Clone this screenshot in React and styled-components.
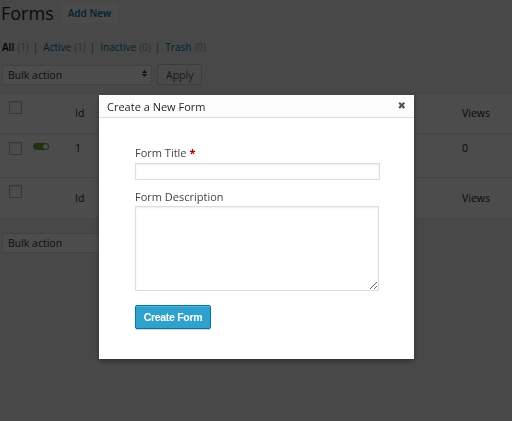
import styled, {createGlobalStyle} from 'styled-components'

const GlobalStyle = createGlobalStyle`
  html, body {
    margin: 0;
    padding: 0;
    background: #f1f1f1;
  }
  body {
    width: 512px;
    height: 421px;
    overflow: hidden;
    font-family: "Open Sans", "DejaVu Sans", sans-serif;
    font-size: 11px;
    color: #444;
  }
`

const Wrap = styled.div`
  display: flex;
  flex-direction: column;
`

const Heading = styled.div`
  display: flex;
  align-items: center;
  gap: 7px;
  height: 27px;
`

const Title = styled.h1`
  margin: 0 0 0 1px;
  font-size: 18px;
  font-weight: 400;
  line-height: 27px;
  color: #23282d;
`

const AddNew = styled.a`
  display: flex;
  align-items: center;
  height: 20px;
  padding: 0 7px;
  margin-top: -1px;
  background: #fafafa;
  border-radius: 2px;
  font-size: 10px;
  font-weight: 600;
  color: #0073aa;
`

const Filters = styled.ul`
  display: flex;
  list-style: none;
  margin: 13px 0 0 2px;
  padding: 0;
  font-size: 10px;
  line-height: 14px;
  color: #666;
`

const FilterItem = styled.li`
  display: flex;
  gap: 3px;
  color: ${p => (p.$current ? '#000' : '#0073aa')};
  font-weight: ${p => (p.$current ? 600 : 400)};
`

const Count = styled.span`
  color: #999;
  font-weight: 400;
`

const Sep = styled.span`
  color: #666;
  margin: 0 5px 0 4px;
`

const TableNav = styled.div`
  display: flex;
  align-items: center;
  gap: 5px;
  margin: ${p => p.$top}px 0 0 2px;
`

const SelectBox = styled.div`
  position: relative;
  width: 150px;
  height: 20px;
`

const Select = styled.select`
  appearance: none;
  width: 100%;
  height: 100%;
  padding: 0 0 0 5px;
  background: #fff;
  border: 1px solid #ddd;
  border-radius: 0;
  font-family: inherit;
  font-size: 10.5px;
  color: #32373c;
`

const Arrows = styled.span`
  position: absolute;
  right: 5px;
  top: 5px;
  display: flex;
  flex-direction: column;
  gap: 1px;
  pointer-events: none;
`

const Button = styled.button`
  height: 21px;
  padding: 0 8px;
  background: #f7f7f7;
  border: 1px solid #ccc;
  border-radius: 2px;
  font-family: inherit;
  font-size: 10.5px;
  color: #555;
`

const Table = styled.div`
  display: grid;
  grid-template-columns: 30px 40px 1fr 57px;
  margin-top: 8px;
  background: #fff;
  border-top: 1px solid #e1e1e1;
  border-bottom: 1px solid #e1e1e1;
`

const Cell = styled.div`
  display: flex;
  align-items: ${p => (p.$head ? 'center' : 'flex-start')};
  height: ${p => (p.$head ? 40 : 44)}px;
  padding: ${p => (p.$head ? 0 : 8)}px 0 0 ${p => p.$pad || 0}px;
  box-sizing: border-box;
  border-bottom: ${p => (p.$last ? 'none' : '1px solid #e1e1e1')};
  font-size: 10.5px;
  line-height: 13px;
  color: #222;
`

const CheckCell = styled(Cell)`
  align-items: flex-start;
  padding-top: ${p => (p.$head ? 7 : 8)}px;
`

const Check = styled.span`
  width: 13px;
  height: 13px;
  box-sizing: border-box;
  background: #fff;
  border: 1px solid #b4b9be;
  box-shadow: inset 0 1px 2px rgba(0, 0, 0, 0.1);
`

const Toggle = styled.span`
  display: flex;
  justify-content: flex-end;
  align-items: center;
  width: 16px;
  height: 7px;
  margin-top: 1px;
  padding: 0 1px;
  box-sizing: border-box;
  border-radius: 4px;
  background: #64a832;
  &::after {
    content: '';
    width: 5px;
    height: 5px;
    border-radius: 50%;
    background: #fff;
  }
`

const Overlay = styled.div`
  position: fixed;
  inset: 0;
  background: rgba(0, 0, 0, 0.7);
`

const Modal = styled.div`
  position: fixed;
  top: 95px;
  left: calc(50% - 157px);
  width: 315px;
  height: 264px;
  display: flex;
  flex-direction: column;
  background: #fff;
  box-shadow: 0 2px 5px rgba(0, 0, 0, 0.4);
`

const ModalHeader = styled.div`
  display: flex;
  align-items: center;
  justify-content: space-between;
  height: 22px;
  padding: 0 8px;
  background: #fcfcfc;
  border-bottom: 1px solid #ddd;
  font-size: 11px;
  color: #23282d;
`

const Close = styled.span`
  font-family: "DejaVu Sans", sans-serif;
  font-size: 10px;
  color: #555;
  line-height: 1;
`

const ModalBody = styled.form`
  display: flex;
  flex-direction: column;
  align-items: flex-start;
  padding: 28px 0 0 36px;
`

const Label = styled.label`
  font-size: 11px;
  line-height: 14px;
  color: #444;
  margin-top: ${p => p.$top || 0}px;
  margin-bottom: ${p => p.$bottom || 2}px;
`

const Req = styled.span`
  color: #a00;
  font-weight: 700;
`

const Input = styled.input`
  width: 245px;
  height: 17px;
  box-sizing: border-box;
  border: 1px solid #ddd;
  box-shadow: inset 0 1px 2px rgba(0, 0, 0, 0.07);
  padding: 0 3px;
  margin: 0;
`

const TextArea = styled.textarea`
  width: 244px;
  height: 85px;
  box-sizing: border-box;
  border: 1px solid #ddd;
  box-shadow: inset 0 1px 2px rgba(0, 0, 0, 0.07);
  margin: 0;
`

const Primary = styled.button`
  width: 76px;
  height: 24px;
  margin-top: 14px;
  padding: 0;
  background: #2ea2cc;
  border: 1px solid #0074a2;
  border-radius: 2px;
  box-shadow: inset 0 1px 0 rgba(120, 200, 230, 0.5), 0 1px 0 rgba(0, 0, 0, 0.15);
  font-family: "Liberation Sans", Arial, sans-serif;
  font-size: 10.5px;
  letter-spacing: -0.3px;
  font-weight: 700;
  color: #fff;
`

function BulkSelect() {
  return (
    <SelectBox>
      <Select defaultValue="">
        <option value="">Bulk action</option>
        <option value="trash">Move to Trash</option>
      </Select>
      <Arrows>
        <svg width="5" height="3" viewBox="0 0 5 3"><path d="M0 3 L2.5 0 L5 3 Z" fill="#32373c" /></svg>
        <svg width="5" height="3" viewBox="0 0 5 3"><path d="M0 0 L2.5 3 L5 0 Z" fill="#32373c" /></svg>
      </Arrows>
    </SelectBox>
  )
}

function HeadRow({last}) {
  return (
    <>
      <CheckCell $head $pad={9} $last={last}><Check /></CheckCell>
      <Cell $head $last={last} />
      <Cell $head $pad={5} $last={last}>Id</Cell>
      <Cell $head $pad={7} $last={last}>Views</Cell>
    </>
  )
}

export default function App() {
  return (
    <>
      <GlobalStyle />
      <Wrap>
        <Heading>
          <Title>Forms</Title>
          <AddNew>Add New</AddNew>
        </Heading>
        <Filters>
          <FilterItem $current>All <Count>(1)</Count></FilterItem>
          <Sep>|</Sep>
          <FilterItem>Active <Count>(1)</Count></FilterItem>
          <Sep>|</Sep>
          <FilterItem>Inactive <Count>(0)</Count></FilterItem>
          <Sep>|</Sep>
          <FilterItem>Trash <Count>(0)</Count></FilterItem>
        </Filters>
        <TableNav $top={10}>
          <BulkSelect />
          <Button>Apply</Button>
        </TableNav>
        <Table>
          <HeadRow />
          <CheckCell $pad={9}><Check /></CheckCell>
          <Cell $pad={3}><Toggle /></Cell>
          <Cell $pad={5}>1</Cell>
          <Cell $pad={7}>0</Cell>
          <HeadRow last />
        </Table>
        <TableNav $top={14}>
          <BulkSelect />
        </TableNav>
      </Wrap>
      <Overlay />
      <Modal>
        <ModalHeader>
          <span>Create a New Form</span>
          <Close>✖</Close>
        </ModalHeader>
        <ModalBody>
          <Label htmlFor="form-title" $bottom={3}>Form Title <Req>*</Req></Label>
          <Input id="form-title" type="text" />
          <Label htmlFor="form-desc" $top={10}>Form Description</Label>
          <TextArea id="form-desc" />
          <Primary type="button">Create Form</Primary>
        </ModalBody>
      </Modal>
    </>
  )
}
